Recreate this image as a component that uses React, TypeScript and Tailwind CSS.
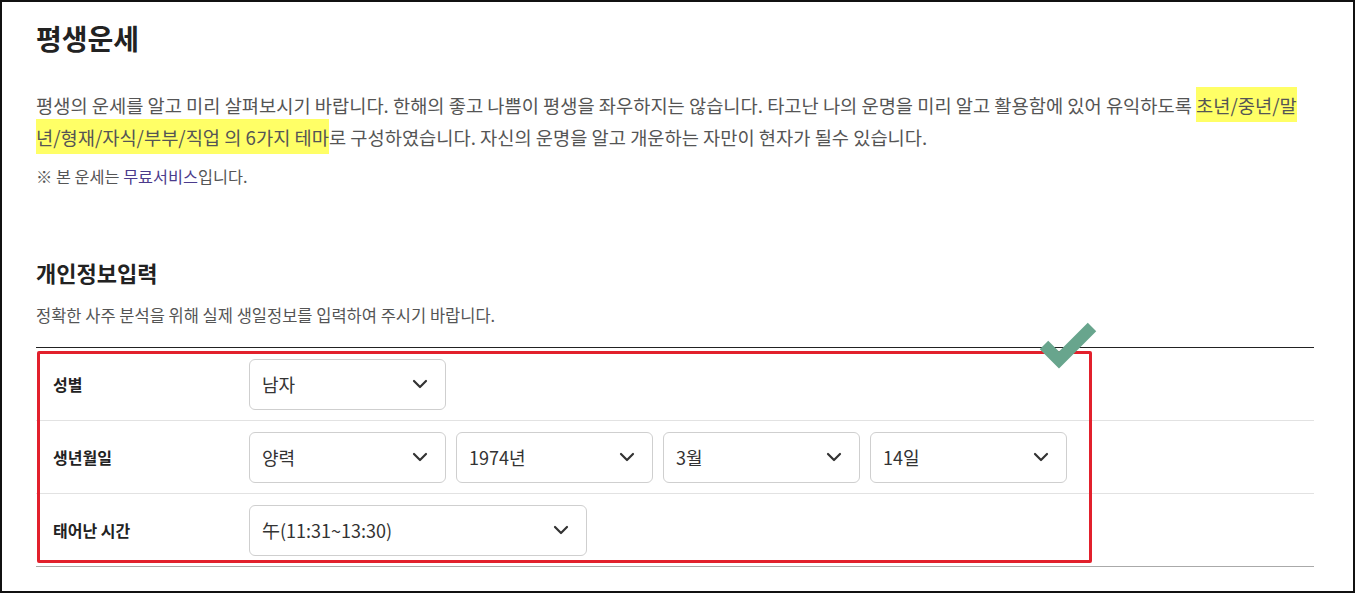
import { FC } from 'react';

const FONT = { fontFamily: '"Noto Sans CJK KR", "Noto Sans", sans-serif' };

const Chevron: FC = () => (
  <svg width="16" height="10" viewBox="0 0 16 10" className="shrink-0">
    <polyline points="2,2 8,8 14,2" fill="none" stroke="#333" strokeWidth="2.2" strokeLinecap="round" strokeLinejoin="round" />
  </svg>
);

const Select: FC<{ value: string; width?: string }> = ({ value, width = 'w-[197px]' }) => (
  <div className={`${width} h-[51px] border border-[#cfcfcf] rounded-[6px] bg-white flex items-center justify-between pl-[12px] pr-[17px] text-[18px] text-[#333]`}>
    <span>{value}</span>
    <Chevron />
  </div>
);

const Row: FC<{ label: string; children: React.ReactNode; last?: boolean }> = ({ label, children, last }) => (
  <div className={`flex items-center h-[73px] border-b ${last ? 'border-[#aaa]' : 'border-[#e2e2e2]'}`}>
    <div className="w-[213px] pl-[17px] text-[16px] font-bold text-[#222]">{label}</div>
    <div className="flex gap-[10px]">{children}</div>
  </div>
);

export default function App() {
  return (
    <div style={FONT} className="w-[1355px] h-[593px] border-2 border-[#111] bg-white overflow-hidden">
      <div className="pl-[34px] pr-[39px] pt-[18px]">
        <h1 className="text-[28px] leading-[36px] font-bold text-[#222]">평생운세</h1>
        <p className="mt-[33px] text-[18.7px] leading-[32px] text-[#555]">
          평생의 운세를 알고 미리 살펴보시기 바랍니다. 한해의 좋고 나쁨이 평생을 좌우하지는 않습니다. 타고난 나의 운명을 미리 알고 활용함에 있어 유익하도록{' '}
          <span className="bg-[#ffff66] py-[4px]">초년/중년/말년/형재/자식/부부/직업 의 6가지 테마</span>로 구성하였습니다. 자신의 운명을 알고 개운하는 자만이 현자가 될수 있습니다.
        </p>
        <p className="mt-[11px] text-[16.3px] leading-[24px] text-[#555]">
          ※ 본 운세는 <span className="text-[#4b3b8c]">무료서비스</span>입니다.
        </p>
        <h2 className="mt-[70px] text-[22px] leading-[28px] font-bold text-[#222]">개인정보입력</h2>
        <p className="mt-[17px] text-[16.5px] leading-[24px] text-[#555]">정확한 사주 분석을 위해 실제 생일정보를 입력하여 주시기 바랍니다.</p>
        <div className="relative mt-[20px] border-t border-[#222]">
          <Row label="성별">
            <Select value="남자" />
          </Row>
          <Row label="생년월일">
            <Select value="양력" />
            <Select value="1974년" />
            <Select value="3월" />
            <Select value="14일" />
          </Row>
          <Row label="태어난 시간" last>
            <Select value="午(11:31~13:30)" width="w-[338px]" />
          </Row>
          <div className="absolute left-[1px] top-[3px] w-[1055px] h-[212px] border-[3px] border-[#e2202c] rounded-[2px] pointer-events-none" />
          <svg className="absolute left-[1002px] top-[-31px]" width="60" height="52" viewBox="0 0 60 52">
            <polyline points="6,28 21,43 54,10" fill="none" stroke="#68a58d" strokeWidth="12" />
          </svg>
        </div>
      </div>
    </div>
  );
}
